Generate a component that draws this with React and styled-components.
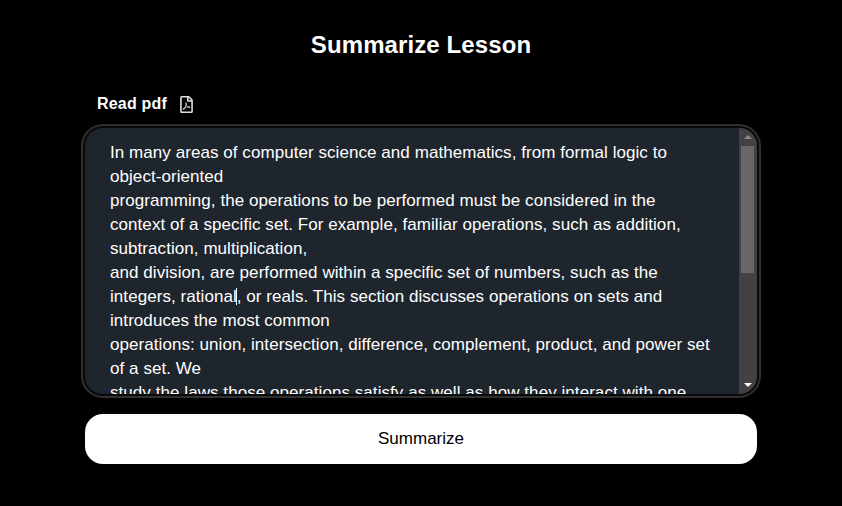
import React from "react";
import styled, { createGlobalStyle } from "styled-components";
import { FaRegFilePdf } from "react-icons/fa";

const GlobalStyle = createGlobalStyle`
  html, body {
    margin: 0;
    background: #000;
    font-family: "Liberation Sans", Arial, sans-serif;
  }
`;

const Page = styled.div`
  width: 672px;
  margin: 0 auto;
  height: 506px;
  color: #fff;
`;

const Title = styled.h1`
  margin: 0;
  padding-top: 29px;
  font-size: 24px;
  line-height: 32px;
  font-weight: 700;
  letter-spacing: 0.1px;
  text-align: center;
`;

const PdfRow = styled.div`
  display: flex;
  align-items: center;
  gap: 11px;
  margin: 29px 0 0 12px;
  height: 28px;
`;

const PdfLabel = styled.span`
  font-size: 16px;
  font-weight: 700;
  letter-spacing: 0.2px;
`;

const TextBox = styled.div`
  display: flex;
  height: 266px;
  margin-top: 10px;
  overflow: hidden;
  background: #1e252d;
  border-radius: 18px;
  box-shadow: 0 0 0 2px #0a0a0a, 0 0 0 4px #303030;
`;

const TextPane = styled.div`
  flex: 1;
  min-width: 0;
  padding: 13px 25px;
  font-size: 17px;
  line-height: 24px;
  letter-spacing: 0.06px;
  white-space: pre-wrap;
`;

const Caret = styled.span`
  display: inline-block;
  width: 1px;
  height: 17px;
  margin-left: -1px;
  background: #fff;
  vertical-align: -3px;
`;

const ScrollTrack = styled.div`
  flex: none;
  display: flex;
  flex-direction: column;
  width: 18px;
  background: #424242;
`;

const ScrollButton = styled.div`
  flex: none;
  display: flex;
  align-items: center;
  justify-content: center;
  height: 18px;
`;

const Arrow = styled.span`
  width: 0;
  height: 0;
  border-left: 4px solid transparent;
  border-right: 4px solid transparent;
  border-bottom: ${(p) => (p.$up ? "4px solid #8a8a8a" : "0")};
  border-top: ${(p) => (p.$up ? "0" : "4px solid #fff")};
`;

const ScrollThumb = styled.div`
  flex: none;
  height: 127px;
  margin: 0 3px 0 2px;
  background: #686868;
`;

const ScrollSpacer = styled.div`
  flex: 1;
`;

const SubmitButton = styled.button`
  display: block;
  width: 100%;
  height: 50px;
  margin-top: 20px;
  border: 0;
  border-radius: 18px;
  background: #fff;
  color: #000;
  font-family: inherit;
  font-size: 17px;
`;

const App = () => (
  <>
    <GlobalStyle />
    <Page>
      <Title>Summarize Lesson</Title>
      <PdfRow>
        <PdfLabel>Read pdf</PdfLabel>
        <FaRegFilePdf size={17} color="#ddd" />
      </PdfRow>
      <TextBox>
        <TextPane>
          {"In many areas of computer science and mathematics, from formal logic to object-oriented\nprogramming, the operations to be performed must be considered in the context of a specific set. For example, familiar operations, such as addition, subtraction, multiplication,\nand division, are performed within a specific set of numbers, such as the integers, rational"}
          <Caret />
          {", or reals. This section discusses operations on sets and introduces the most common\noperations: union, intersection, difference, complement, product, and power set of a set. We\nstudy the laws those operations satisfy as well as how they interact with one"}
        </TextPane>
        <ScrollTrack>
          <ScrollButton>
            <Arrow $up />
          </ScrollButton>
          <ScrollThumb />
          <ScrollSpacer />
          <ScrollButton>
            <Arrow />
          </ScrollButton>
        </ScrollTrack>
      </TextBox>
      <SubmitButton>Summarize</SubmitButton>
    </Page>
  </>
);

export default App;
